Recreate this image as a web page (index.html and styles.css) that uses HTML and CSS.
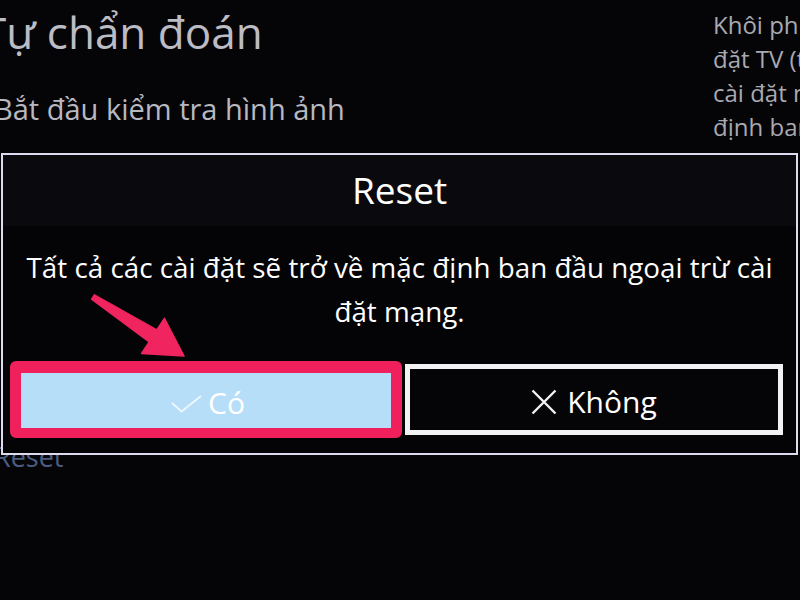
FILE: index.html
```html
<!DOCTYPE html>
<html lang="vi">
<head>
<meta charset="utf-8">
<title>Reset</title>
<link rel="stylesheet" href="styles.css">
</head>
<body>
<div class="screen">
  <div class="left">
    <div class="title">Tự chẩn đoán</div>
    <div class="subtitle">Bắt đầu kiểm tra hình ảnh</div>
    <div class="menu-item">Reset</div>
  </div>
  <div class="right">
    <div class="desc-line">Khôi phục cài</div>
    <div class="desc-line">đặt TV (trừ</div>
    <div class="desc-line">cài đặt mạng) về mặc</div>
    <div class="desc-line">định ban đầu.</div>
  </div>
</div>

<div class="dialog">
  <div class="dialog-head">Reset</div>
  <div class="dialog-body">Tất cả các cài đặt sẽ trở về mặc định ban đầu ngoại trừ cài<br>đặt mạng.</div>
  <div class="dialog-buttons">
    <div class="btn btn-yes">
      <svg class="icon-check" width="31" height="18" viewBox="0 0 31 18"><path d="M1 8 L10.5 16.5 L30 1" fill="none" stroke="#eef7fd" stroke-width="1.8"/></svg>
      <span class="btn-label">Có</span>
    </div>
    <div class="btn btn-no">
      <svg class="icon-x" width="26" height="26" viewBox="0 0 26 26"><path d="M1.5 1.5 L24.5 24.5 M24.5 1.5 L1.5 24.5" fill="none" stroke="#f2f2f2" stroke-width="2.4"/></svg>
      <span class="btn-label">Không</span>
    </div>
  </div>
</div>

<svg class="arrow" width="800" height="600" viewBox="0 0 800 600">
  <polygon points="94.4,294.9 156.8,330 164.4,318.3 184,356 141.6,353.5 149.2,341.8 91.6,299.1" fill="#f0245e" stroke="#f0245e" stroke-width="1.5" stroke-linejoin="round"/>
</svg>
</body>
</html>
```

FILE: styles.css
```css
html, body {
  margin: 0;
  padding: 0;
}
body {
  width: 800px;
  height: 600px;
  overflow: hidden;
  background: #050507;
  font-family: "Open Sans", "Noto Sans", "DejaVu Sans", sans-serif;
  position: relative;
}
.screen {
  display: flex;
  justify-content: space-between;
  height: 600px;
}
.left {
  padding-top: 4px;
  color: #bcbcc4;
}
.title {
  margin-left: -18px;
  font-size: 44px;
  line-height: 56px;
  white-space: nowrap;
}
.subtitle {
  margin-top: 29px;
  margin-left: -6px;
  font-size: 29px;
  line-height: 40px;
  color: #b8b8c0;
  white-space: nowrap;
}
.menu-item {
  margin-top: 310px;
  margin-left: -6px;
  font-size: 27px;
  line-height: 36px;
  color: #4c5c82;
}
.right {
  width: 87px;
  padding-top: 8px;
  overflow: hidden;
  color: #a9a9b2;
  font-size: 24px;
  line-height: 34px;
}
.desc-line {
  white-space: nowrap;
}
.dialog {
  position: absolute;
  left: 1px;
  top: 153px;
  width: 793px;
  height: 298px;
  border: 2px solid #dedaf0;
  background: #040406;
  display: flex;
  flex-direction: column;
  color: #ffffff;
}
.dialog-head {
  height: 60px;
  padding-top: 11px;
  background: #0a0a0e;
  text-align: center;
  font-size: 37px;
  line-height: 48px;
}
.dialog-body {
  padding-top: 19px;
  text-align: center;
  font-size: 27.8px;
  line-height: 44px;
  white-space: nowrap;
}
.dialog-buttons {
  margin-top: 28px;
  padding: 0 13px 0 7px;
  display: flex;
  align-items: center;
  gap: 3px;
}
.btn {
  box-sizing: border-box;
  display: flex;
  align-items: center;
  justify-content: center;
  font-size: 30px;
  color: #ffffff;
}
.btn-label {
  padding-top: 5px;
}
.btn-yes {
  width: 392px;
  height: 77px;
  border-style: solid;
  border-color: #f0205c;
  border-width: 12px 11px 10px 11px;
  border-radius: 6px;
  background: #b6def8;
  line-height: 50px;
  gap: 6px;
  padding-left: 4px;
}
.btn-no {
  width: 378px;
  height: 71px;
  border: 5px solid #f2f2f2;
  background: #050507;
  line-height: 56px;
  gap: 10px;
}
.icon-check {
  margin-top: 7px;
}
.icon-x {
  margin-top: 4px;
}
.arrow {
  position: absolute;
  left: 0;
  top: 0;
  pointer-events: none;
}
```
